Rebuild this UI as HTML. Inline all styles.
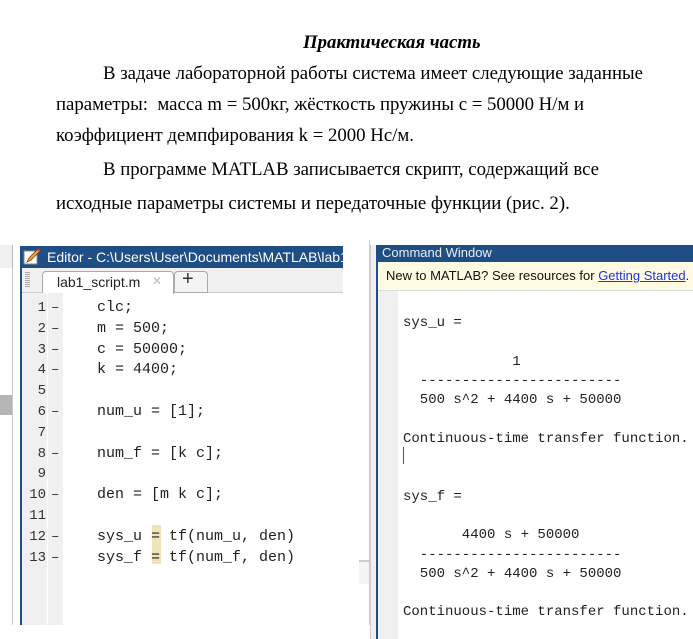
<!DOCTYPE html>
<html><head><meta charset="utf-8"><style>
body{margin:0;width:693px;height:639px;background:#fff;position:relative;overflow:hidden;font-family:"Liberation Serif",serif;}
.t{position:absolute;font-size:18.8px;color:#000;white-space:nowrap;}
.a{position:absolute;}
.m{font-family:"Liberation Mono",monospace;white-space:pre;color:#222;}
.s{font-family:"Liberation Sans",sans-serif;white-space:nowrap;}
</style></head><body>
<div class="t" style="left:303px;top:32px;font-weight:bold;font-style:italic;">Практическая часть</div>
<div class="t" style="left:103px;top:63px;">В задаче лабораторной работы система имеет следующие заданные</div>
<div class="t" style="left:56px;top:94px;">параметры:&nbsp; масса m = 500кг, жёсткость пружины с = 50000 Н/м и</div>
<div class="t" style="left:56px;top:125px;">коэффициент демпфирования k = 2000 Нс/м.</div>
<div class="t" style="left:103px;top:159px;">В программе MATLAB записывается скрипт, содержащий все</div>
<div class="t" style="left:56px;top:193px;">исходные параметры системы и передаточные функции (рис. 2).</div>

<!-- left panel -->
<div class="a" style="left:0;top:245px;width:12px;height:23px;background:#f0f0f0;border-right:1px solid #bbb;"></div>
<div class="a" style="left:0;top:268px;width:12px;height:357px;background:#fff;border-right:1px solid #ccc;"></div>
<div class="a" style="left:0;top:395px;width:12px;height:20px;background:#b5b5b5;"></div>

<!-- editor -->
<div class="a" style="left:20px;top:246px;width:323px;height:22px;background:#1f4e85;"></div>
<svg class="a" style="left:23px;top:248px" width="18" height="18" viewBox="0 0 18 18"><rect x="1" y="3" width="13" height="13" fill="#fff" stroke="#888"/><path d="M4 14 L6 10 L15 1 L17 3 L8 12 Z" fill="#e8a33a" stroke="#7a4a10" stroke-width="0.8"/><path d="M15 1 L17 3" stroke="#d33" stroke-width="2"/></svg>
<div class="a s" style="left:47px;top:249px;font-size:14px;color:#fff;">Editor - C:\Users\User\Documents\MATLAB\lab1</div>
<div class="a" style="left:20px;top:268px;width:2px;height:357px;background:#1f4e85;"></div>
<div class="a" style="left:22px;top:268px;width:321px;height:24px;background:#f0f0f0;border-bottom:1px solid #ccc;"></div>
<div class="a" style="left:25px;top:272px;width:5px;height:16px;background:repeating-linear-gradient(#aaa 0 1px,transparent 1px 2px);"></div>
<div class="a" style="left:42px;top:271px;width:130px;height:22px;background:#fff;border:1px solid #aaa;border-bottom:none;border-radius:4px 4px 0 0;"></div>
<div class="a s" style="left:57px;top:274px;font-size:14px;color:#222;">lab1_script.m</div>
<div class="a s" style="left:152px;top:274px;font-size:12px;color:#bbb;">✕</div>
<div class="a" style="left:174px;top:271px;width:32px;height:20px;background:#f4f4f4;border:1px solid #aaa;border-radius:4px 4px 0 0;"></div>
<div class="a s" style="left:182px;top:268px;font-size:20px;color:#333;">+</div>
<div class="a" style="left:22px;top:293px;width:41px;height:332px;background:#f0f0f0;"></div>
<div class="a" style="left:47px;top:293px;width:1px;height:332px;background:#fff;"></div>
<div class="a m" style="left:22px;top:298px;width:24px;text-align:right;font-size:14px;line-height:20.8px;color:#333;">1
2
3
4
5
6
7
8
9
10
11
12
13</div>
<div class="a m" style="left:51px;top:298px;font-size:14px;line-height:20.8px;color:#333;">–
–
–
–

–

–

–

–
–</div>
<div class="a" style="left:152px;top:525px;width:9px;height:39px;background:#efe2b8;"></div>
<div class="a m" style="left:97px;top:298px;font-size:15px;line-height:20.8px;">clc;
m = 500;
c = 50000;
k = 4400;

num_u = [1];

num_f = [k c];

den = [m k c];

sys_u = tf(num_u, den)
sys_f = tf(num_f, den)</div>
<div class="a" style="left:359px;top:560px;width:11px;height:22px;background:#f4f4f4;border-top:2px solid #ccc;"></div>
<div class="a" style="left:369px;top:240px;width:1px;height:385px;background:#ccc;"></div>

<!-- command window -->
<div class="a" style="left:370px;top:245px;width:6px;height:394px;background:#f0f0f0;border-left:1px solid #ccc;"></div>
<div class="a" style="left:376px;top:245px;width:2px;height:394px;background:#1f4e85;"></div>
<div class="a" style="left:378px;top:245px;width:315px;height:17px;background:#1f4e85;"></div>
<div class="a s" style="left:382px;top:245px;font-size:13px;color:#e8eef5;">Command Window</div>
<div class="a" style="left:378px;top:262px;width:315px;height:28px;background:#fffbe2;border-bottom:1px solid #ddd;"></div>
<div class="a s" style="left:386px;top:268px;font-size:13px;color:#111;">New to MATLAB? See resources for <span style="color:#1a35e6;text-decoration:underline;">Getting Started</span>.</div>
<div class="a" style="left:378px;top:291px;width:20px;height:348px;background:#f0f0f0;"></div>
<div class="a" style="left:403px;top:447px;width:1px;height:17px;background:#555;"></div>
<div class="a m" style="left:403px;top:314px;font-size:14px;line-height:19.3px;color:#222;">sys_u =

             1
  ------------------------
  500 s^2 + 4400 s + 50000

Continuous-time transfer function.


sys_f =

       4400 s + 50000
  ------------------------
  500 s^2 + 4400 s + 50000

Continuous-time transfer function.</div>
</body></html>
